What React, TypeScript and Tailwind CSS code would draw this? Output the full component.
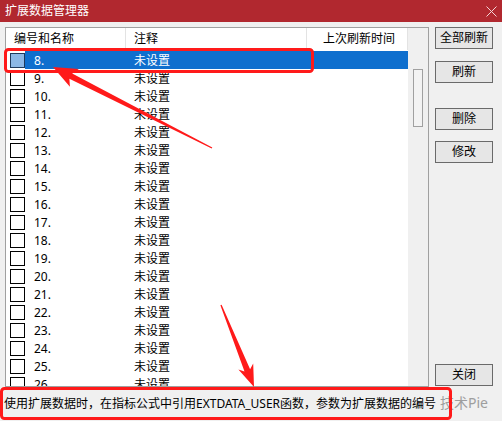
import React from 'react';

const rows = Array.from({ length: 19 }, (_, i) => i + 8);

function Btn({ label, className = '' }: { label: string; className?: string }) {
  return (
    <div
      className={`h-[22px] w-[58px] flex items-center justify-center border border-[#6a6a6a] bg-[#e6e6e6] text-[12px] text-black ${className}`}
    >
      {label}
    </div>
  );
}

export default function App() {
  return (
    <div
      className="relative w-[502px] h-[421px] flex flex-col bg-[#f0f0f0] overflow-hidden"
      style={{ fontFamily: '"Noto Sans", "Noto Sans CJK SC", sans-serif' }}
    >
      {/* Title bar */}
      <div className="h-[22px] shrink-0 bg-[#b1282f] flex items-center justify-between pl-[5px] pr-[5px]">
        <span className="text-white text-[12px] leading-none">扩展数据管理器</span>
        <svg width="11" height="11" viewBox="0 0 11 11">
          <path d="M0.5 0.5 L10.5 10.5 M10.5 0.5 L0.5 10.5" stroke="#f4d4d6" strokeWidth="1" />
        </svg>
      </div>

      {/* Body */}
      <div className="h-[365px] shrink-0 flex pt-[5px] pl-[5px]">
        {/* List box */}
        <div className="w-[424px] h-[360px] border border-[#a0a0a0] bg-white flex">
          <div className="w-[402px] flex flex-col overflow-hidden">
            {/* Header */}
            <div className="h-[22px] shrink-0 flex text-[12px] text-black">
              <div className="w-[120px] flex items-center pl-[8px] border-r border-[#e3e3e3]">编号和名称</div>
              <div className="w-[181px] flex items-center pl-[8px] border-r border-[#e3e3e3]">注释</div>
              <div className="w-[101px] flex items-center pl-[16px] border-r border-[#e3e3e3]">上次刷新时间</div>
            </div>
            {/* Rows */}
            <div className="flex flex-col mt-[1px]">
              {rows.map((n) => {
                const sel = n === 8;
                return (
                  <div key={n} className="h-[18px] shrink-0 flex items-center text-[12px]">
                    <div className="w-[120px] h-full flex items-center">
                      <div
                        className={`ml-[4px] w-[15px] h-[15px] shrink-0 border ${
                          sel ? 'border-[#1f3a5c] bg-[#8cb8e6]' : 'border-black bg-white'
                        }`}
                      />
                      <div
                        className={`h-full flex-1 flex items-center pl-[9px] pt-[1px] ${
                          sel ? 'bg-[#0f6fce] text-white' : 'text-black'
                        }`}
                      >
                        {n}.
                      </div>
                    </div>
                    <div
                      className={`w-[181px] h-full flex items-center pl-[8px] pt-[1px] ${
                        sel ? 'bg-[#0f6fce] text-white' : 'text-black'
                      }`}
                    >
                      未设置
                    </div>
                    <div className={`w-[101px] h-full ${sel ? 'bg-[#0f6fce]' : ''}`} />
                  </div>
                );
              })}
            </div>
          </div>
          {/* Scrollbar */}
          <div className="w-[20px] bg-[#f0f0f0] pt-[41px] pl-[5px]">
            <div className="w-[10px] h-[58px] border border-[#a0a0a0] bg-[#f3f3f3]" />
          </div>
        </div>

        {/* Buttons */}
        <div className="ml-[6px] flex flex-col pb-[1px]">
          <Btn label="全部刷新" />
          <Btn label="刷新" className="mt-[12px]" />
          <Btn label="删除" className="mt-[25px]" />
          <Btn label="修改" className="mt-[11px]" />
          <Btn label="关闭" className="mt-auto" />
        </div>
      </div>

      {/* Status */}
      <div className="h-[34px] shrink-0 flex items-center pl-[4px] text-[12px] text-black">
        使用扩展数据时，在指标公式中引用EXTDATA_USER函数，参数为扩展数据的编号
      </div>

      {/* Watermark */}
      <span className="absolute left-[440px] top-[396px] text-[14px] leading-none text-[#8a8a8a] opacity-80">
        技术Pie
      </span>

      {/* Annotations */}
      <svg className="absolute inset-0 pointer-events-none" width="502" height="421" viewBox="0 0 502 421">
        <rect x="5.5" y="49.5" width="307" height="22" rx="3" fill="none" stroke="#ff1a1a" strokeWidth="3" />
        <rect x="1.5" y="388.5" width="449" height="30" rx="3" fill="none" stroke="#ff1a1a" strokeWidth="3" />
        <polygon
          points="53,67 78.9,69 72.2,73.4 212.3,147.4 211.7,148.6 69.4,78.8 69.9,86.8"
          fill="#ff1a1a"
        />
        <polygon
          points="254,387 253.2,363.6 250.1,369.2 221.6,304.7 220.4,305.3 244.5,371.4 238.4,369.6"
          fill="#ff1a1a"
        />
      </svg>
    </div>
  );
}
